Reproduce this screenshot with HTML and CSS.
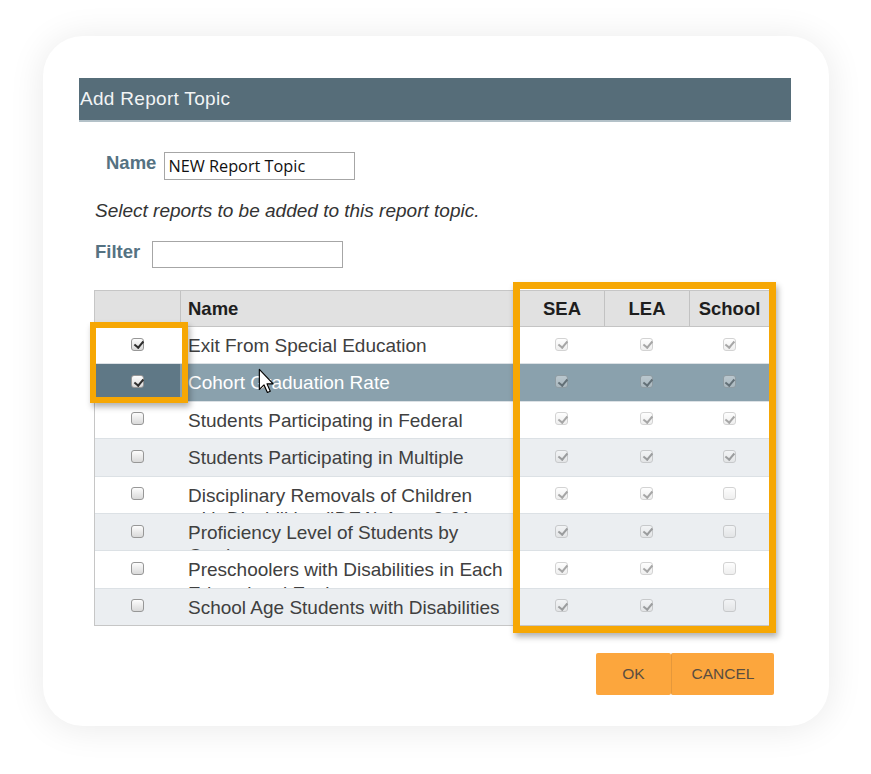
FILE: index.html
```html
<!DOCTYPE html>
<html lang="en">
<head>
<meta charset="utf-8">
<title>Add Report Topic</title>
<link rel="stylesheet" href="styles.css">
</head>
<body>
<div class="page">
  <div class="card">
    <div class="dialog">
      <div class="titlebar">Add Report Topic</div>

      <div class="field name-field">
        <span class="label">Name</span>
        <div class="input">NEW Report Topic</div>
      </div>

      <p class="hint">Select reports to be added to this report topic.</p>

      <div class="field filter-field">
        <span class="label">Filter</span>
        <div class="input short"></div>
      </div>

      <div class="table-wrap">
        <div class="tbl">
          <div class="row head">
            <div class="c"></div>
            <div class="c hname">Name</div>
            <div class="c">SEA</div>
            <div class="c">LEA</div>
            <div class="c">School</div>
          </div>

          <div class="row">
            <div class="c"><span class="cb on"></span></div>
            <div class="name">Exit From Special Education</div>
            <div class="c"><span class="cb on dis"></span></div>
            <div class="c"><span class="cb on dis"></span></div>
            <div class="c"><span class="cb on dis"></span></div>
          </div>

          <div class="row sel">
            <div class="c"><span class="cb on"></span></div>
            <div class="name">Cohort Graduation Rate</div>
            <div class="c"><span class="cb on dis"></span></div>
            <div class="c"><span class="cb on dis"></span></div>
            <div class="c"><span class="cb on dis"></span></div>
          </div>

          <div class="row">
            <div class="c"><span class="cb"></span></div>
            <div class="name">Students Participating in Federal</div>
            <div class="c"><span class="cb on dis"></span></div>
            <div class="c"><span class="cb on dis"></span></div>
            <div class="c"><span class="cb on dis"></span></div>
          </div>

          <div class="row alt">
            <div class="c"><span class="cb"></span></div>
            <div class="name">Students Participating in Multiple</div>
            <div class="c"><span class="cb on dis"></span></div>
            <div class="c"><span class="cb on dis"></span></div>
            <div class="c"><span class="cb on dis"></span></div>
          </div>

          <div class="row">
            <div class="c"><span class="cb"></span></div>
            <div class="name">Disciplinary Removals of Children with Disabilities (IDEA) Ages 3-21</div>
            <div class="c"><span class="cb on dis"></span></div>
            <div class="c"><span class="cb on dis"></span></div>
            <div class="c"><span class="cb dis"></span></div>
          </div>

          <div class="row alt">
            <div class="c"><span class="cb"></span></div>
            <div class="name">Proficiency Level of Students by Grade</div>
            <div class="c"><span class="cb on dis"></span></div>
            <div class="c"><span class="cb on dis"></span></div>
            <div class="c"><span class="cb dis"></span></div>
          </div>

          <div class="row">
            <div class="c"><span class="cb"></span></div>
            <div class="name">Preschoolers with Disabilities in Each Educational Environment</div>
            <div class="c"><span class="cb on dis"></span></div>
            <div class="c"><span class="cb on dis"></span></div>
            <div class="c"><span class="cb dis"></span></div>
          </div>

          <div class="row alt">
            <div class="c"><span class="cb"></span></div>
            <div class="name">School Age Students with Disabilities</div>
            <div class="c"><span class="cb on dis"></span></div>
            <div class="c"><span class="cb on dis"></span></div>
            <div class="c"><span class="cb dis"></span></div>
          </div>
        </div>

        <div class="hl hl-select"></div>
        <div class="hl hl-levels"></div>

        <svg class="cursor" width="17" height="26" viewBox="0 0 13 20">
          <path d="M1 1 L1 16.5 L4.6 13 L7.2 18.8 L9.4 17.9 L6.9 12.2 L11.6 12.2 Z" fill="#ffffff" stroke="#000000" stroke-width="0.9" stroke-linejoin="round"/>
        </svg>
      </div>

      <div class="actions">
        <button class="btn ok">OK</button>
        <button class="btn cancel">CANCEL</button>
      </div>
    </div>
  </div>
</div>
</body>
</html>
```

FILE: styles.css
```css
* {
  box-sizing: border-box;
}

html,
body {
  margin: 0;
  background: #ffffff;
}

body {
  width: 871px;
  height: 774px;
  overflow: hidden;
  font-family: "Liberation Sans", Arial, sans-serif;
  color: #333333;
}

.page {
  padding: 36px 0 0 43px;
}

.card {
  width: 786px;
  height: 690px;
  border-radius: 40px;
  background: #ffffff;
  box-shadow: 0 2px 36px rgba(0, 0, 0, 0.09);
  padding: 42px 0 0 36px;
}

.dialog {
  width: 712px;
  display: flex;
  flex-direction: column;
}

.titlebar {
  height: 44px;
  background: #566d79;
  border-bottom: 2px solid #b3c1c8;
  color: #f2f4f5;
  font-size: 19px;
  letter-spacing: 0.3px;
  display: flex;
  align-items: center;
  padding-left: 1px;
}

.field {
  display: flex;
  align-items: flex-start;
}

.name-field {
  margin-top: 30px;
  padding-left: 27px;
  gap: 8px;
}

.filter-field {
  margin-top: 19px;
  padding-left: 16px;
  gap: 12px;
}

.label {
  font-weight: bold;
  font-size: 18.5px;
  line-height: 22px;
  color: #557282;
}

.input {
  width: 191px;
  height: 28px;
  border: 1px solid #a6a6a6;
  background: #ffffff;
  font-family: "Open Sans", "Liberation Sans", sans-serif;
  font-size: 16.3px;
  line-height: 26px;
  padding: 0 3px;
  color: #111111;
}

.input.short {
  height: 27px;
}

.hint {
  margin: 20px 0 0 16px;
  font-style: italic;
  font-size: 19px;
  line-height: 22px;
  color: #333333;
}

.table-wrap {
  position: relative;
  margin: 22px 0 0 15px;
  width: 676px;
}

.tbl {
  border: 1px solid #c6c6c6;
  border-bottom: 0;
}

.row {
  display: grid;
  grid-template-columns: 85px 339px 85px 85px 80px;
  height: 37.375px;
  border-bottom: 1px solid #dce1e5;
  background: #ffffff;
}

.row:last-child {
  border-bottom-color: #c6c6c6;
}

.row.alt {
  background: #ebeef1;
}

.row.sel {
  background: #8aa1ad;
}

.row.sel .c:first-child {
  background: #5f7886;
}

.row.sel .name {
  color: #ffffff;
}

.row.head {
  height: 36px;
  background: #e1e1e1;
  border-bottom-color: #c4c4c4;
}

.c {
  display: flex;
  align-items: center;
  justify-content: center;
  overflow: hidden;
}

.head .c {
  font-weight: bold;
  font-size: 18.5px;
  color: #1e1e1e;
  border-left: 1px solid #c2c2c2;
}

.head .c:first-child {
  border-left: 0;
}

.head .hname {
  justify-content: flex-start;
  padding-left: 7px;
}

.name {
  overflow: hidden;
  padding: 7px 8px 0;
  font-size: 19px;
  line-height: 23.5px;
  color: #404040;
}

.cb {
  position: relative;
  width: 13px;
  height: 13px;
  margin-bottom: 2px;
  border: 1px solid #979797;
  border-radius: 3px;
  background: linear-gradient(#fdfdfd, #d9d9d9);
}

.cb.on::after {
  content: "";
  position: absolute;
  left: 3.5px;
  top: 0.5px;
  width: 3.5px;
  height: 7px;
  border: solid #2e2e2e;
  border-width: 0 2px 2px 0;
  transform: rotate(40deg);
}

.cb.dis {
  opacity: 0.42;
}

.hl {
  position: absolute;
  border: 6px solid #f6a704;
  box-shadow: 2px 4px 6px rgba(0, 0, 0, 0.3);
  pointer-events: none;
}

.hl-select {
  left: -4px;
  top: 32px;
  width: 98px;
  height: 81px;
}

.hl-levels {
  left: 419px;
  top: -8px;
  width: 263px;
  height: 351px;
  border-width: 7px;
}

.cursor {
  position: absolute;
  left: 164px;
  top: 78px;
}

.actions {
  display: flex;
  justify-content: flex-end;
  margin-top: 27px;
  padding-right: 17px;
}

.btn {
  height: 42px;
  padding: 0;
  border: 0;
  border-radius: 2px;
  background: #fca63d;
  color: #5a4d40;
  font-family: "Liberation Sans", Arial, sans-serif;
  font-size: 15.5px;
}

.btn.ok {
  width: 75px;
}

.btn.cancel {
  width: 103px;
  border-left: 1px solid #e5983b;
}
```
